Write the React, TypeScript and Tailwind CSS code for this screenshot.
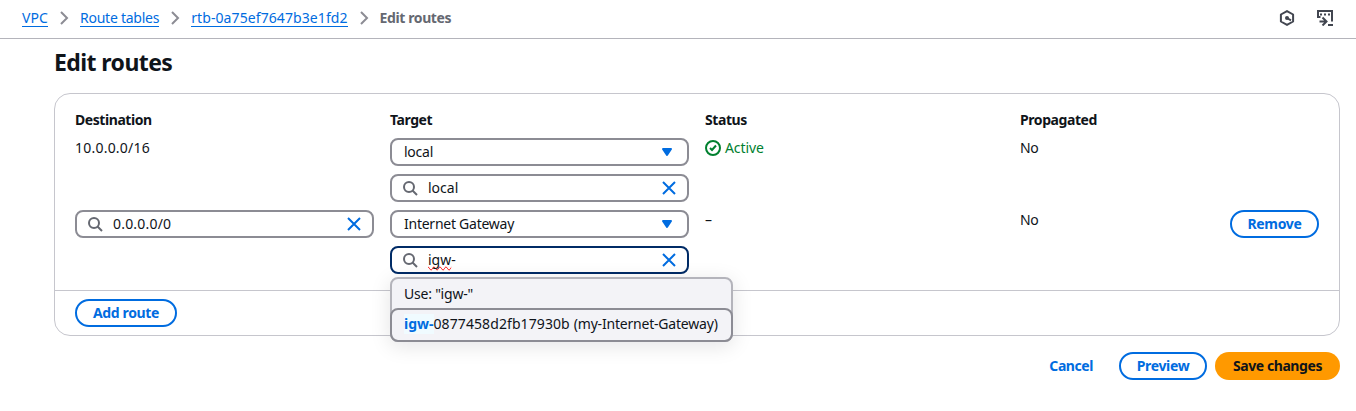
import type { ReactNode } from "react";

function SearchIcon() {
  return (
    <svg viewBox="0 0 16 16" className="h-4 w-4 shrink-0" fill="none" stroke="#656871" strokeWidth="2">
      <circle cx="7" cy="7" r="5" />
      <path d="m15 15-4.5-4.5" />
    </svg>
  );
}

function CloseIcon() {
  return (
    <svg viewBox="0 0 16 16" className="h-4 w-4 shrink-0" fill="none" stroke="#006ce0" strokeWidth="2">
      <path d="m2 2 12 12M14 2 2 14" />
    </svg>
  );
}

function CaretIcon() {
  return (
    <svg viewBox="0 0 16 16" className="h-4 w-4 shrink-0" fill="#006ce0" stroke="#006ce0" strokeWidth="2" strokeLinejoin="round">
      <path d="M4 5h8l-4 6-4-6Z" />
    </svg>
  );
}

function Chevron() {
  return (
    <svg viewBox="0 0 16 16" className="mx-2 h-4 w-4 shrink-0" fill="none" stroke="#8c8c94" strokeWidth="2">
      <path d="m5 2 6 6-6 6" />
    </svg>
  );
}

function StatusIcon() {
  return (
    <svg viewBox="0 0 16 16" className="h-4 w-4 shrink-0" fill="none" stroke="#00802f" strokeWidth="2">
      <circle cx="8" cy="8" r="7" />
      <path d="m5 8 2 2 4-4.5" />
    </svg>
  );
}

function Crumb({ children, className }: { children: ReactNode; className: string }) {
  return <a className={`border-b border-[#006ce0] leading-[17px] text-[#006ce0] ${className}`}>{children}</a>;
}

function ColumnTitle({ children }: { children: ReactNode }) {
  return <div className="font-bold tracking-[-0.43px]">{children}</div>;
}

function Select({ children }: { children: ReactNode }) {
  return (
    <div className="flex h-7 items-center justify-between rounded-lg border-2 border-[#8c8c94] bg-white px-3">
      <span className="tracking-[-0.25px]">{children}</span>
      <CaretIcon />
    </div>
  );
}

function Search({ children, focused = false }: { children: ReactNode; focused?: boolean }) {
  return (
    <div
      className={`flex h-7 items-center rounded-lg border-2 bg-white px-2.5 ${
        focused ? "border-[#002b66]" : "border-[#8c8c94]"
      }`}
    >
      <SearchIcon />
      <span className="ml-2.5 flex-1">{children}</span>
      <CloseIcon />
    </div>
  );
}

function OutlineButton({ children, className }: { children: ReactNode; className: string }) {
  return (
    <button
      className={`flex h-7 items-center justify-center rounded-full border-2 border-[#006ce0] bg-white font-bold tracking-[-0.35px] text-[#006ce0] ${className}`}
    >
      {children}
    </button>
  );
}

export default function App() {
  return (
    <div className="h-[411px] overflow-hidden bg-white font-['Noto_Sans','Open_Sans',sans-serif] text-[14px] leading-5 text-[#0f141a]">
      <header className="flex h-[39px] items-center border-b border-[#b4b4bb] pr-[23px] pb-0.5 pl-[22px]">
        <nav className="flex items-center">
          <Crumb className="tracking-[0.1px]">VPC</Crumb>
          <Chevron />
          <Crumb className="tracking-[-0.25px]">Route tables</Crumb>
          <Chevron />
          <Crumb className="tracking-[0.09px]">rtb-0a75ef7647b3e1fd2</Crumb>
          <Chevron />
          <span className="font-bold tracking-[-0.4px] text-[#656871]">Edit routes</span>
        </nav>
        <div className="ml-auto flex items-center gap-[22px]">
          <svg viewBox="0 0 16 16" className="h-4 w-4" fill="none" stroke="#424650" strokeWidth="2">
            <path d="m8 1.1 6.100 3.400v7L8 14.900l-6.100-3.400v-7Z" strokeLinejoin="round" />
            <circle cx="8" cy="8" r="2" fill="#424650" stroke="none" />
            <path d="m8 8 4 2.300" />
          </svg>
          <svg viewBox="0 0 16 16" className="h-4 w-4" fill="none" stroke="#424650" strokeWidth="2">
            <path d="M3.500 7H1V1h14v10.500M3 4.500h2M7 4.500h2M11 4.500h2M2.500 11.500H9M5.500 7.500l4 4-4 4M11 15h5" />
          </svg>
        </div>
      </header>

      <main className="pr-4 pl-[54px]">
        <h1 className="pt-[8px] text-[23px] leading-[30px] font-bold tracking-[-0.58px]">Edit routes</h1>

        <section className="mt-4 h-[243px] rounded-2xl border border-[#c6c6cd]">
          <div className="grid h-[196px] grid-cols-[299px_299px_299px_299px] grid-rows-[20px_64px_64px] gap-x-4 gap-y-2 px-5 pt-4">
            <ColumnTitle>Destination</ColumnTitle>
            <ColumnTitle>Target</ColumnTitle>
            <ColumnTitle>Status</ColumnTitle>
            <ColumnTitle>Propagated</ColumnTitle>

            <div className="tracking-[0.22px]">10.0.0.0/16</div>
            <div className="flex flex-col gap-2">
              <Select>local</Select>
              <Search>local</Search>
            </div>
            <div className="flex h-5 items-center gap-1 text-[#00802f]">
              <StatusIcon />
              <span className="tracking-[-0.1px]">Active</span>
            </div>
            <div className="tracking-[-0.3px]">No</div>

            <div>
              <Search>
                <span className="tracking-[0.2px]">0.0.0.0/0</span>
              </Search>
            </div>
            <div className="relative flex flex-col gap-2">
              <Select>Internet Gateway</Select>
              <Search focused>
                <span className="[text-decoration-line:spelling-error]">igw</span>-
              </Search>
              <div className="absolute top-[67px] left-0 z-10 w-[343px] rounded-lg border-2 border-[#b4b4bb] bg-[#f3f3f7] shadow-[0_4px_20px_1px_rgba(0,7,22,0.1)]">
                <div className="flex h-[29px] items-center px-3 tracking-[-0.22px]">Use: "igw-"</div>
                <div className="-mx-0.5 -mb-0.5 flex h-[34px] items-center rounded-lg border-2 border-[#8c8c94] px-3 pb-0.5 whitespace-nowrap">
                  <span className="bg-[#f0fbff] font-bold text-[#006ce0]">igw-</span>
                  <span className="tracking-[0.09px]">0877458d2fb17930b</span>
                  <span className="ml-1 tracking-[-0.2px]">(my-Internet-Gateway)</span>
                </div>
              </div>
            </div>
            <div>–</div>
            <div className="flex justify-between">
              <span className="tracking-[-0.3px]">No</span>
              <OutlineButton className="w-[89px]">Remove</OutlineButton>
            </div>
          </div>
          <div className="flex border-t border-[#c6c6cd] px-5 pt-2">
            <OutlineButton className="w-[102px]">Add route</OutlineButton>
          </div>
        </section>

        <div className="mt-4 flex justify-end gap-2">
          <button className="mr-[18px] font-bold tracking-[-0.43px] text-[#006ce0]">Cancel</button>
          <OutlineButton className="w-[88px]">Preview</OutlineButton>
          <button className="h-7 w-[125px] rounded-full bg-[#ff9900] font-bold tracking-[-0.43px]">Save changes</button>
        </div>
      </main>
    </div>
  );
}
